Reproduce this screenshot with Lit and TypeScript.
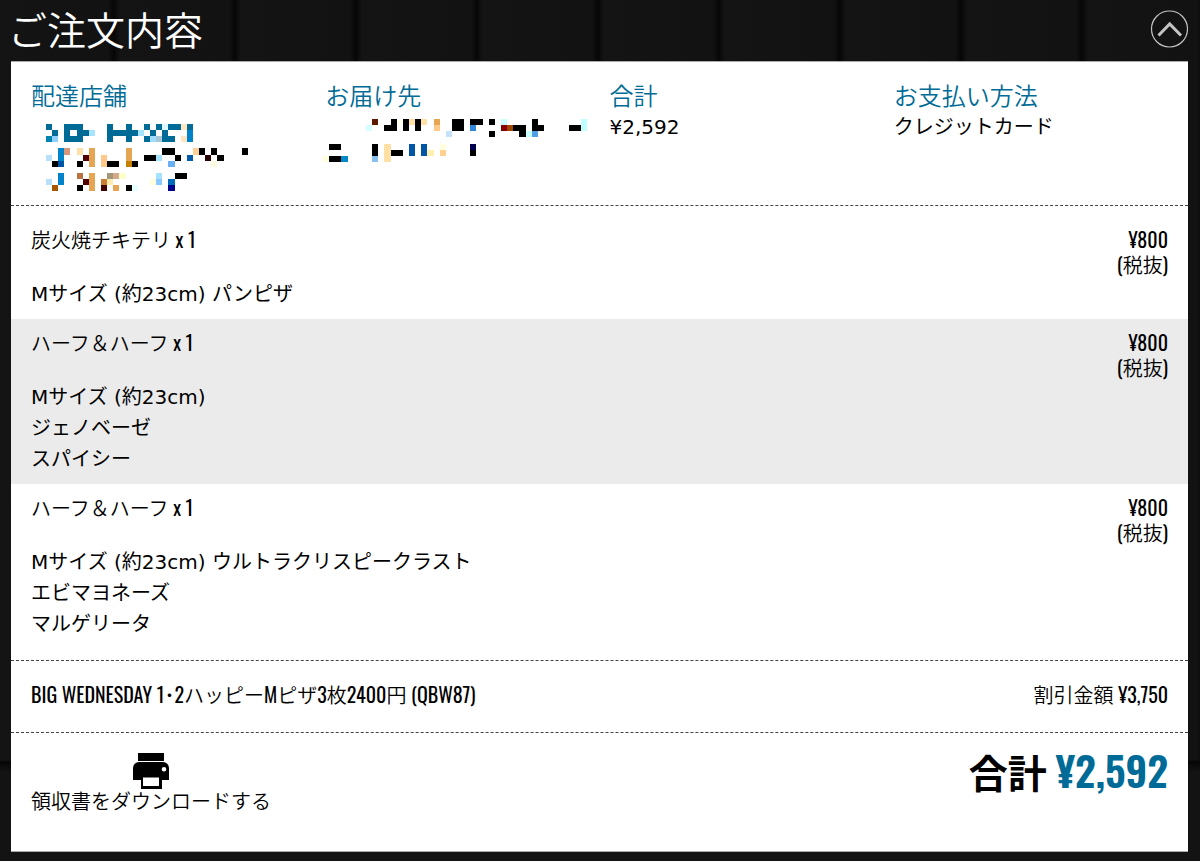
import { LitElement, html, css, svg } from "lit";
import { customElement, property, state } from "lit/decorators.js";

type Run = [row: number, col: number, length: number, color: string];

const K = "#000000";
const T = "#006b96";
const B = "#0083c8";
const O = "#e5a552";

const STORE_BLOCKS: Run[] = [
  [0, 0, 1, T], [0, 3, 3, T], [0, 10, 1, T], [0, 13, 1, T], [0, 16, 1, T], [0, 18, 1, T],
  [0, 19, 1, "#dff8ff"], [0, 20, 2, T], [0, 22, 1, "#ffe5c0"], [0, 23, 1, T],
  [1, 1, 1, T], [1, 3, 1, T], [1, 5, 2, T], [1, 7, 1, "#a5e3ff"], [1, 10, 5, T],
  [1, 15, 1, "#a5e3ff"], [1, 17, 1, T], [1, 19, 1, T], [1, 23, 1, B],
  [2, 0, 1, "#0083b0"], [2, 1, 1, "#8fd0ff"], [2, 3, 3, T], [2, 10, 1, T], [2, 13, 1, T],
  [2, 16, 1, T], [2, 17, 1, "#a0dcff"], [2, 18, 1, "#a8c8d8"], [2, 19, 2, T],
  [2, 22, 1, "#ffe5c0"], [2, 23, 1, B],
  [4, 2, 1, B], [4, 3, 1, "#d8967a"], [4, 5, 1, "#ffe0a8"], [4, 7, 1, O], [4, 13, 1, O],
  [4, 19, 2, K], [4, 24, 1, "#ffd09a"], [4, 25, 1, K], [4, 27, 1, K], [4, 32, 1, K],
  [5, 0, 1, "#b8e0f8"], [5, 2, 1, B], [5, 6, 1, "#500000"], [5, 7, 1, O],
  [5, 9, 1, "#ffc78a"], [5, 13, 1, O], [5, 16, 2, K], [5, 18, 1, "#a5e3ff"], [5, 21, 1, K],
  [5, 23, 1, "#005cab"], [5, 26, 1, "#250000"], [5, 28, 1, K],
  [6, 1, 1, K], [6, 2, 1, "#0056a4"], [6, 5, 1, K], [6, 7, 1, O], [6, 9, 1, "#ffc78a"],
  [6, 10, 2, K], [6, 13, 1, "#c88000"], [6, 14, 1, K], [6, 20, 1, "#6ab0f5"], [6, 27, 1, "#fffde0"],
  [8, 2, 1, B], [8, 5, 1, "#b87340"], [8, 7, 1, O], [8, 10, 1, "#a09878"],
  [8, 11, 1, "#d4a98a"], [8, 12, 1, "#ffffcc"], [8, 18, 1, "#a5e3ff"], [8, 21, 2, K],
  [9, 0, 1, "#b8e0f8"], [9, 2, 1, B], [9, 6, 1, "#500000"], [9, 7, 1, O],
  [9, 9, 1, "#c87e35"], [9, 10, 1, "#ffebb0"], [9, 17, 1, "#ffffe0"], [9, 18, 1, "#8ac8ff"],
  [9, 20, 1, "#006bb8"],
  [10, 1, 1, "#a85800"], [10, 5, 1, K], [10, 7, 1, O], [10, 9, 1, "#400000"],
  [10, 11, 1, O], [10, 13, 1, K], [10, 14, 1, "#e5ffff"], [10, 20, 1, "#000088"],
];

const ADDRESS_BLOCKS: Run[] = [
  [0, 8, 1, "#5c1800"], [0, 11, 1, K], [0, 12, 1, "#fffff0"], [0, 13, 1, K],
  [0, 14, 1, "#ffe0a5"], [0, 15, 1, K], [0, 16, 1, "#ffe0a5"], [0, 18, 1, O], [0, 21, 2, K],
  [0, 24, 2, K], [0, 27, 1, K], [0, 29, 1, "#c8ffff"], [0, 34, 1, K], [0, 42, 1, "#c0ffff"],
  [1, 7, 1, "#d8ffff"], [1, 10, 2, K], [1, 13, 1, K], [1, 15, 1, K], [1, 18, 1, "#ffc888"],
  [1, 21, 2, K], [1, 24, 1, "#3088d8"], [1, 29, 1, "#880000"], [1, 30, 1, "#a04800"],
  [1, 31, 2, K], [1, 34, 2, K], [1, 40, 2, K], [1, 42, 1, "#c0ffff"],
  [2, 20, 1, "#c4e2f8"], [2, 27, 1, K], [2, 32, 1, K], [2, 33, 1, "#c8ffff"], [2, 34, 1, "#50a0e8"],
  [4, 1, 2, K], [4, 8, 1, K], [4, 10, 1, "#ffe0a5"], [4, 14, 1, "#0055a4"],
  [4, 16, 1, "#0055a4"], [4, 19, 1, "#ffffe0"], [4, 24, 1, "#000050"],
  [5, 8, 1, K], [5, 10, 1, "#ffe0a5"], [5, 11, 2, K], [5, 14, 1, "#0055a4"],
  [5, 16, 1, "#0055a4"], [5, 17, 1, "#fff0b0"], [5, 19, 1, "#ffd090"], [5, 24, 1, K],
  [6, 0, 1, "#ffffe0"], [6, 1, 2, K], [6, 3, 1, "#0088c8"], [6, 8, 1, "#88c0f0"],
  [6, 10, 1, "#ffe0a5"],
];

interface Item {
  name: string;
  count: number;
  price: string;
  details: string[];
}

const ITEMS: Item[] = [
  { name: "炭火焼チキテリ", count: 1, price: "¥800", details: ["Mサイズ (約23cm) パンピザ"] },
  { name: "ハーフ＆ハーフ", count: 1, price: "¥800", details: ["Mサイズ (約23cm)", "ジェノベーゼ", "スパイシー"] },
  {
    name: "ハーフ＆ハーフ",
    count: 1,
    price: "¥800",
    details: ["Mサイズ (約23cm) ウルトラクリスピークラスト", "エビマヨネーズ", "マルゲリータ"],
  },
];

@customElement("masked-text")
export class MaskedText extends LitElement {
  @property({ attribute: false }) runs: Run[] = [];
  @property({ type: Number }) columns = 1;
  @property({ type: Number }) rows = 1;

  static styles = css`
    :host {
      display: block;
    }
    svg {
      display: block;
      width: 100%;
    }
  `;

  render() {
    return html`<svg viewBox="0 0 ${this.columns} ${this.rows}" shape-rendering="crispEdges" aria-hidden="true">
      ${this.runs.map(
        ([row, col, length, color]) =>
          svg`<rect x=${col} y=${row} width=${length} height="1" fill=${color}></rect>`,
      )}
    </svg>`;
  }
}

@customElement("app-root")
export class AppRoot extends LitElement {
  @state() private open = true;

  static styles = css`
    :host {
      --accent: #006b96;
      --condensed: Oswald, "Noto Sans CJK JP", sans-serif;
      display: block;
      box-sizing: border-box;
      min-height: 100vh;
      padding: 0 12px 9px 8px;
      background:
        linear-gradient(transparent 760px, #050505 762px, #0b0b0b 765px, #131313 772px),
        repeating-linear-gradient(
          90deg,
          #141414 0,
          #121212 108px,
          #060606 114px,
          #0e0e0e 117px,
          #151515 121px
        );
      color: #000;
      font: 350 20px/31px "DejaVu Sans", "Noto Sans CJK JP", sans-serif;
    }
    h1,
    h2,
    p,
    ul {
      margin: 0;
      padding: 0;
    }
    ul {
      list-style: none;
    }
    .top {
      display: flex;
      justify-content: space-between;
      height: 61px;
      color: #fff;
    }
    h1 {
      font: 350 39px/57px "Noto Sans CJK JP", sans-serif;
    }
    .toggle {
      width: 38px;
      height: 38px;
      margin-top: 10px;
      padding: 0;
      border: 0;
      background: none;
      cursor: pointer;
    }
    .toggle svg {
      display: block;
    }
    .toggle.closed svg {
      transform: rotate(180deg);
    }
    .panel {
      margin-left: 3px;
      border: 1px solid #aaa;
      border-width: 1px 0;
      background: #fff;
    }
    .summary {
      display: grid;
      grid-template-columns: calc(25% + 10px) 25% 25% 1fr;
      box-sizing: border-box;
      min-height: 143px;
      padding: 20px 20px 12px;
    }
    h2 {
      color: var(--accent);
      font-size: 24px;
      line-height: 30px;
      font-weight: 350;
    }
    .store {
      width: 202px;
      margin: 12px 0 0 15px;
    }
    .address {
      width: 264px;
      margin: 7px 0 0 -2px;
    }
    .value,
    .detail {
      font-weight: 400;
    }
    .items {
      padding: 10px 0 11px;
      border-top: 1px dashed #444;
      border-bottom: 1px dashed #444;
    }
    .item {
      display: flex;
      justify-content: space-between;
      padding: 13px 20px 9px;
    }
    .item:nth-child(even) {
      background: #ebebeb;
    }
    .name {
      margin-bottom: 25px;
      line-height: 25px;
    }
    .strong {
      font-family: var(--condensed);
      font-weight: 450;
      line-height: 1;
    }
    .price {
      text-align: right;
    }
    .price p {
      line-height: 25px;
    }
    .coupon {
      display: flex;
      justify-content: space-between;
      padding: 20px;
      border-bottom: 1px dashed #444;
    }
    .footer {
      display: flex;
      align-items: flex-start;
      justify-content: space-between;
      box-sizing: border-box;
      min-height: 118px;
      padding: 20px;
    }
    .receipt {
      display: flex;
      flex-direction: column;
      align-items: center;
      color: inherit;
      line-height: 26px;
      text-decoration: none;
    }
    .receipt svg {
      display: block;
    }
    .total {
      font: 700 39px/36px "Noto Sans CJK JP", sans-serif;
    }
    .total b {
      color: var(--accent);
      font-family: var(--condensed);
      font-size: 41px;
      font-weight: 600;
      line-height: 1px;
    }
  `;

  private toggle() {
    this.open = !this.open;
  }

  private renderItem(item: Item) {
    return html`<li class="item">
      <div>
        <p class="name">${item.name}<b class="strong"> x ${item.count}</b></p>
        ${item.details.map((line) => html`<p class="detail">${line}</p>`)}
      </div>
      <div class="price">
        <p><b class="strong">${item.price}</b></p>
        <p><b class="strong">(</b>税抜<b class="strong">)</b></p>
      </div>
    </li>`;
  }

  render() {
    return html`
      <header class="top">
        <h1>ご注文内容</h1>
        <button
          class="toggle ${this.open ? "" : "closed"}"
          type="button"
          aria-label="ご注文内容"
          aria-expanded=${this.open ? "true" : "false"}
          @click=${this.toggle}
        >
          <svg width="38" height="38" viewBox="0 0 38 38" fill="none" stroke="#c4c4c4">
            <circle cx="19.500" cy="19" r="18" stroke-width="1.2" />
            <path d="M8.500 25.500 19.700 14l11.300 11.500" stroke-width="3" />
          </svg>
        </button>
      </header>
      <main class="panel" ?hidden=${!this.open}>
        <section class="summary">
          <div>
            <h2>配達店舗</h2>
            <masked-text class="store" .runs=${STORE_BLOCKS} columns="33" rows="11"></masked-text>
          </div>
          <div>
            <h2>お届け先</h2>
            <masked-text class="address" .runs=${ADDRESS_BLOCKS} columns="43" rows="7"></masked-text>
          </div>
          <div>
            <h2>合計</h2>
            <p class="value">¥2,592</p>
          </div>
          <div>
            <h2>お支払い方法</h2>
            <p class="value">クレジットカード</p>
          </div>
        </section>
        <ul class="items">
          ${ITEMS.map((item) => this.renderItem(item))}
        </ul>
        <section class="coupon">
          <p>
            <b class="strong">BIG WEDNESDAY 1･2</b>ハッピー<b class="strong">M</b>ピザ<b class="strong">3</b>枚<b
              class="strong"
              >2400</b
            >円<b class="strong"> (QBW87)</b>
          </p>
          <p>割引金額<b class="strong"> ¥3,750</b></p>
        </section>
        <section class="footer">
          <a class="receipt" href="#receipt">
            <svg width="36" height="36" viewBox="0 0 36 36" aria-hidden="true">
              <path d="M5 0h26v8H5z" />
              <path
                fill-rule="evenodd"
                d="M6 9h24a6 6 0 0 1 6 6v12h-7v9H8v-9H0V15a6 6 0 0 1 6-6zm4 15.500V33h16v-8.500zM31 14a2.300 2.300 0 1 0 0 4.600 2.300 2.300 0 0 0 0-4.600z"
              />
            </svg>
            <span>領収書をダウンロードする</span>
          </a>
          <p class="total">合計 <b>¥2,592</b></p>
        </section>
      </main>
    `;
  }
}
